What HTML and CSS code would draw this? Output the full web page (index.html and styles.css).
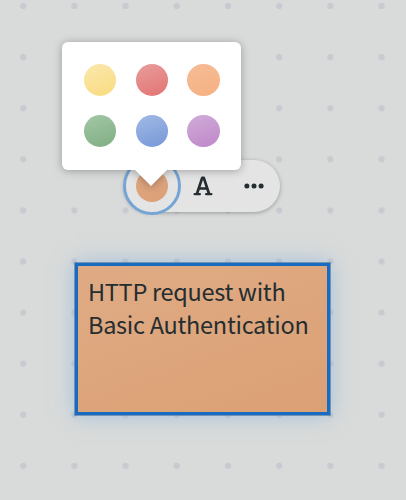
FILE: index.html
```
<!DOCTYPE html>
<html lang="en">
<head>
<meta charset="utf-8">
<title>Sticky note</title>
<link rel="stylesheet" href="styles.css">
</head>
<body>
<main class="board">
  <div class="toolbar">
    <div class="color-button"><span class="current-color"></span></div>
    <svg class="font-icon" width="20" height="20" viewBox="0 0 20 20" fill="none" stroke="#242d30" stroke-width="2.7" stroke-linejoin="round">
      <path d="M3.9 18 9.2 1.8h1.6L16.1 18M5.8 12.5h8.4"/>
      <path d="M1.7 18.1h5.1M13.2 18.1h5.1" stroke-linecap="round" stroke-width="2.4"/>
    </svg>
    <svg class="more-icon" width="20" height="6" viewBox="0 0 20 6" fill="#242d30">
      <circle cx="2.9" cy="3" r="2.5"/><circle cx="10" cy="3" r="2.5"/><circle cx="17.1" cy="3" r="2.5"/>
    </svg>
    <div class="palette">
      <span class="swatch yellow"></span><span class="swatch red"></span><span class="swatch orange"></span>
      <span class="swatch green"></span><span class="swatch blue"></span><span class="swatch purple"></span>
    </div>
  </div>
  <div class="note">HTTP request with<br>Basic Authentication</div>
</main>
</body>
</html>
```
FILE: styles.css
```
* { box-sizing: border-box; }

body { margin: 0; }

.board {
  width: 406px;
  height: 500px;
  overflow: hidden;
  padding-top: 160px;
  background-color: #d9dbda;
  background-image: radial-gradient(circle, #c8cad0 2.8px, transparent 3.6px);
  background-size: 51.2px 51.1px;
  background-position: -2.4px -19.5px;
}

.toolbar {
  position: relative;
  display: flex;
  align-items: center;
  width: 156px;
  height: 51.5px;
  margin-left: 124px;
  border-radius: 26px;
  background: #e4e4e4;
  box-shadow: 0 1px 4px rgba(0, 0, 0, .3);
}

.color-button {
  display: flex;
  align-items: center;
  justify-content: center;
  flex: none;
  width: 58px;
  height: 58px;
  margin-left: -1.3px;
  border: 3px solid #74a5d5;
  border-radius: 50%;
}

.current-color {
  width: 32px;
  height: 32px;
  border-radius: 50%;
  background: linear-gradient(160deg, #dca780, #dda078);
}

.font-icon { margin-left: 12.5px; flex: none; }

.more-icon { margin-left: 31px; flex: none; }

.palette {
  position: absolute;
  left: -61.6px;
  top: -118px;
  display: grid;
  grid-template-columns: repeat(3, 32.4px);
  align-content: start;
  gap: 19px 19.2px;
  width: 179px;
  height: 128px;
  padding: 22px 21.6px;
  border-radius: 6px;
  background: #fff;
  filter: drop-shadow(0 1px 4px rgba(0, 0, 0, .3));
}

.palette::after {
  content: "";
  position: absolute;
  left: 73px;
  top: 127.5px;
  border: 16.5px solid transparent;
  border-top-color: #fff;
  border-bottom: 0;
}

.swatch { height: 32px; border-radius: 50%; }
.yellow { background: linear-gradient(160deg, #fae7ac, #f9dc80); }
.red { background: linear-gradient(160deg, #e99d9c, #e17473); }
.orange { background: linear-gradient(160deg, #f5bc96, #f6b181); }
.green { background: linear-gradient(160deg, #a3c7a5, #7fae83); }
.blue { background: linear-gradient(160deg, #a2b9e5, #7598d8); }
.purple { background: linear-gradient(160deg, #d0acd9, #bf87c8); }

.note {
  width: 255px;
  height: 152px;
  margin: 51.5px 0 0 75px;
  padding: 9px 10px 0;
  border: 3px solid #176bc0;
  outline: 1px solid rgba(70, 110, 155, .6);
  background: linear-gradient(160deg, #dfab84, #dca075);
  box-shadow: 0 0 20px rgba(120, 170, 220, .6);
  color: #242d30;
  font: 23.5px/33px "Noto Sans CJK JP", "Noto Sans", sans-serif;
  letter-spacing: -.28px;
  white-space: nowrap;
}
```
